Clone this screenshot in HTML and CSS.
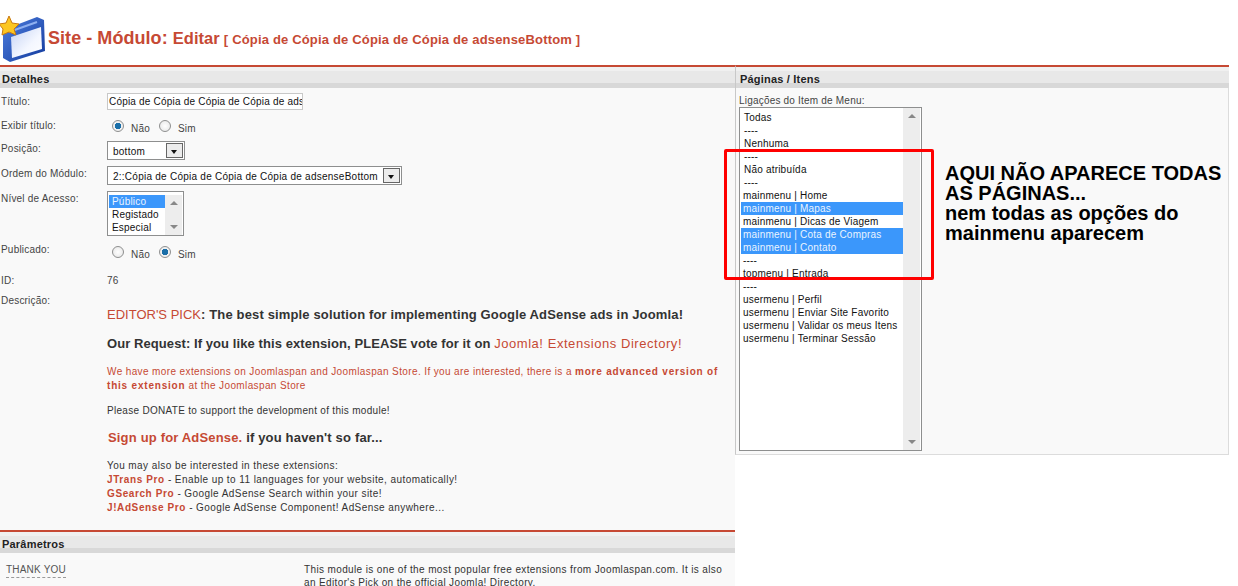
FILE: index.html
```html
<!DOCTYPE html>
<html lang="pt">
<head>
<meta charset="utf-8">
<title>Site - Módulo: Editar</title>
<link rel="stylesheet" href="styles.css">
</head>
<body>
<div class="page">
  <header class="toolbar">
    <svg class="logo" width="46" height="62" viewBox="0 0 46 62">
      <defs>
        <linearGradient id="pane" x1="0" y1="0" x2="1" y2="1"><stop offset="0" stop-color="#c4d2f4"/><stop offset=".6" stop-color="#f4f7ff"/><stop offset="1" stop-color="#ffffff"/></linearGradient>
        <linearGradient id="frame" x1="0" y1="0" x2="1" y2="1"><stop offset="0" stop-color="#4f7fe0"/><stop offset="1" stop-color="#123a9c"/></linearGradient>
      </defs>
      <path d="M3 29 L37 16 L44 19 L45 50 L10 61 L3 57 Z" fill="url(#frame)"/>
      <path d="M11 36 L41 26 L42 48 L12 57 Z" fill="url(#pane)"/>
      <path d="M9 31 L37 21" stroke="#8fb0f0" stroke-width="2" fill="none"/>
      <path d="M9 15 L12 22 L19 23 L14 28 L16 34 L9 31 L2 34 L3 28 L-1 23 L6 22 Z" fill="#fcc621" stroke="#c9790f" stroke-width="1"/>
    </svg>
    <h1 class="title">Site - Módulo: <span class="title-sub">Editar</span> <small class="title-name">[ Cópia de Cópia de Cópia de Cópia de adsenseBottom ]</small></h1>
  </header>
  <div class="columns">
    <section class="left">
      <h2 class="bar">Detalhes</h2>
      <div class="form">
        <div class="row row-titulo"><span class="lab">Título:</span><div class="input">Cópia de Cópia de Cópia de Cópia de ads</div></div>
        <div class="row row-exibir"><span class="lab">Exibir título:</span><div class="radios"><i class="radio on"></i><span>Não</span><i class="radio"></i><span>Sim</span></div></div>
        <div class="row row-pos"><span class="lab">Posição:</span><div class="select sel-pos"><span>bottom</span><b class="arrow"></b></div></div>
        <div class="row row-ordem"><span class="lab">Ordem do Módulo:</span><div class="select sel-ordem"><span>2::Cópia de Cópia de Cópia de Cópia de adsenseBottom</span><b class="arrow"></b></div></div>
        <div class="row row-nivel"><span class="lab">Nível de Acesso:</span>
          <div class="list list-nivel">
            <div class="opts"><div class="opt sel">Público</div><div class="opt">Registado</div><div class="opt">Especial</div></div>
            <div class="scroll"><i class="up"></i><i class="down"></i></div>
          </div>
        </div>
        <div class="row row-pub"><span class="lab">Publicado:</span><div class="radios"><i class="radio"></i><span>Não</span><i class="radio on"></i><span>Sim</span></div></div>
        <div class="row row-id"><span class="lab">ID:</span><span class="val">76</span></div>
        <div class="row row-desc"><span class="lab">Descrição:</span></div>
        <div class="desc">
          <p class="big p1"><span class="red">EDITOR'S PICK</span>: The best simple solution for implementing Google AdSense ads in Joomla!</p>
          <p class="big p2">Our Request: If you like this extension, PLEASE vote for it on <span class="red">Joomla! Extensions Directory!</span></p>
          <p class="small-red p3">We have more extensions on Joomlaspan and Joomlaspan Store. If you are interested, there is a <b>more advanced version of this extension</b> at the Joomlaspan Store</p>
          <p class="plain p4">Please DONATE to support the development of this module!</p>
          <p class="big p5"><b class="red">Sign up for AdSense.</b> if you haven't so far...</p>
          <p class="plain p6">You may also be interested in these extensions:<br><b class="red">JTrans Pro</b> - Enable up to 11 languages for your website, automatically!<br><b class="red">GSearch Pro</b> - Google AdSense Search within your site!<br><b class="red">J!AdSense Pro</b> - Google AdSense Component! AdSense anywhere...</p>
        </div>
      </div>
      <h2 class="bar bar-par">Parâmetros</h2>
      <div class="params">
        <span class="thank">THANK YOU</span>
        <p class="par-text">This module is one of the most popular free extensions from Joomlaspan.com. It is also an Editor's Pick on the official Joomla! Directory.</p>
      </div>
    </section>
    <section class="right">
      <h2 class="bar bar-right">Páginas / Itens</h2>
      <div class="panel">
        <div class="panel-label">Ligações do Item de Menu:</div>
        <div class="list list-menu">
          <div class="opts">
            <div class="opt in">Todas</div><div class="opt in">----</div><div class="opt in">Nenhuma</div><div class="opt in">----</div><div class="opt in">Não atribuída</div><div class="opt in">----</div>
            <div class="opt">mainmenu | Home</div><div class="opt sel">mainmenu | Mapas</div><div class="opt">mainmenu | Dicas de Viagem</div><div class="opt sel">mainmenu | Cota de Compras</div><div class="opt sel">mainmenu | Contato</div><div class="opt">----</div><div class="opt">topmenu | Entrada</div><div class="opt">----</div>
            <div class="opt">usermenu | Perfil</div><div class="opt">usermenu | Enviar Site Favorito</div><div class="opt">usermenu | Validar os meus Itens</div><div class="opt">usermenu | Terminar Sessão</div>
          </div>
          <div class="scroll"><i class="up"></i><i class="down"></i></div>
        </div>
      </div>
    </section>
  </div>
  <div class="redbox"></div>
  <div class="note"><strong>AQUI NÃO APARECE TODAS<br>AS PÁGINAS...</strong><br>nem todas as opções do<br>mainmenu aparecem</div>
</div>
</body>
</html>
```
FILE: styles.css
```css
html, body { margin: 0; padding: 0; background: #fff; }
body { font-family: "Liberation Sans", Arial, sans-serif; font-size: 10px; color: #333; }
.page { position: relative; width: 1238px; height: 586px; overflow: hidden; }
.toolbar { height: 65px; display: flex; align-items: flex-start; }
.logo { flex: none; margin-top: 1px; }
.title { margin: 27px 0 0 2px; font-size: 18px; line-height: 22px; font-weight: bold; color: #c64934; white-space: nowrap; letter-spacing: .05px; }
.title-sub { font-size: 16.5px; }
.title-name { font-size: 13px; letter-spacing: .17px; margin-left: -1px; }
.columns { display: flex; align-items: flex-start; }
.left { width: 735px; flex: none; background: #f9f9f9; height: 521px; overflow: hidden; }
.right { width: 494px; flex: none; }
.bar { margin: 0; height: 23px; box-sizing: border-box; border-top: 2px solid #c64934; padding: 5px 0 0 2px; font-size: 11px; line-height: 14px; font-weight: bold; color: #222; letter-spacing: .2px;
  background: linear-gradient(#f0f0f0 0, #f0f0f0 4px, #e8e8e8 4px, #e8e8e8 16px, #d8d8d8 16px, #d8d8d8 100%); }
.bar-right { padding-left: 4px; border-left: 1px solid #c8c8c8; }
.form { height: 442px; }
.row { display: flex; align-items: flex-start; }
.lab { width: 107px; flex: none; font-size: 10px; line-height: 13px; color: #444; letter-spacing: .2px; padding-left: 1px; box-sizing: border-box; }
.row-titulo { height: 25px; padding-top: 5px; }
.row-titulo .lab { margin-top: 2px; }
.row-exibir { height: 23px; }
.row-exibir .lab { margin-top: 1px; }
.row-pos { height: 25px; }
.row-ordem { height: 25px; }
.row-nivel { height: 52px; }
.row-pub { height: 31px; }
.row-pub .radios { margin-top: 1px; }
.row-id { height: 20px; }
.row-desc { height: 13px; }
.row-pos .lab, .row-ordem .lab { margin-top: 1px; }
.row-nivel .lab { margin-top: 1px; }
.input { width: 196px; height: 17px; box-sizing: border-box; border: 1px solid #c8c8c8; background: #fff; font-size: 10px; line-height: 15px; color: #111; overflow: hidden; white-space: nowrap; letter-spacing: .2px; padding-left: 1px; }
.radios { display: flex; align-items: center; margin-left: 5px; height: 16px; font-size: 10px; color: #444; letter-spacing: .2px; }
.radios span { margin: 4px 9px 0 7px; }
.radio { width: 10px; height: 10px; border-radius: 50%; border: 1px solid #8e8f8f; background: radial-gradient(#fff, #e4e4e4); display: block; flex: none; }
.radio.on { background: radial-gradient(#1a6ea8 0, #1a6ea8 3px, #f0f0f0 3.5px); }
.val { font-size: 10px; line-height: 13px; color: #444; letter-spacing: .2px; }
.select { height: 19px; box-sizing: border-box; border: 1px solid #8e8f8f; background: #fff; display: flex; align-items: center; justify-content: space-between; font-size: 10px; color: #111; padding: 0 1px 0 5px; white-space: nowrap; letter-spacing: .25px; }
.select span { padding-top: 1px; }
.sel-pos { width: 78px; }
.sel-ordem { width: 295px; }
.arrow { display: block; width: 17px; height: 15px; box-sizing: border-box; border: 1px solid #666; background: #ececec; position: relative; }
.arrow::after { content: ""; position: absolute; left: 4px; top: 6px; border: 3.5px solid transparent; border-top: 4px solid #111; border-bottom: 0; }
.list { box-sizing: border-box; border: 1px solid #8e8f8f; background: #fff; display: flex; }
.list-nivel { width: 77px; height: 45px; padding: 3px 1px 0; }
.list-nivel .opt { padding-left: 3px; }
.opts { flex: 1; min-width: 0; }
.opt { height: 13px; line-height: 13px; font-size: 10px; color: #111; padding-left: 2px; white-space: nowrap; letter-spacing: .2px; }
.opt.in { padding-left: 3px; }
.opt.sel { background: #3b97fb; color: #eaf4ff; }
.scroll { flex: none; width: 17px; background: #ededed; position: relative; }
.scroll .up, .scroll .down { position: absolute; left: 5px; border: 4px solid transparent; }
.scroll .up { top: 6px; border-bottom: 4px solid #888; border-top: 0; }
.scroll .down { bottom: 6px; border-top: 4px solid #888; border-bottom: 0; }
.desc { padding: 0 12px 0 107px; }
.desc p { margin: 0; }
.red { color: #c64934; }
.big { font-size: 13px; line-height: 16px; font-weight: bold; color: #333; }
.big span.red { font-weight: normal; letter-spacing: .55px; }
.p1 { letter-spacing: .15px; }
.big.p1 span.red { letter-spacing: 0; }
.desc .p2 { margin-top: 13px; letter-spacing: .08px; }
.small-red { font-size: 10px; line-height: 14px; color: #c64934; letter-spacing: .38px; }
.small-red b { letter-spacing: .8px; }
.desc .p3 { margin-top: 13px; }
.plain { font-size: 10px; line-height: 14px; color: #333; }
.desc .p4 { margin-top: 11px; letter-spacing: .3px; }
.desc .p5 { margin-top: 12px; padding-left: 1px; letter-spacing: .17px; }
.desc .p6 { margin-top: 13px; letter-spacing: .42px; }
.desc .p6 b { letter-spacing: .6px; }
.bar-par { margin-top: 0; }
.params { height: 40px; display: flex; align-items: flex-start; padding-top: 10px; }
.thank { margin-left: 6px; flex: none; font-size: 10px; line-height: 13px; padding-bottom: 1px; color: #555; letter-spacing: .2px; border-bottom: 1px dashed #999; }
.par-text { margin: 0 0 0 auto; width: 431px; box-sizing: border-box; padding-right: 12px; font-size: 10px; line-height: 13px; color: #333; letter-spacing: .37px; }
.panel { height: 367px; box-sizing: border-box; background: #f9f9f9; border: 1px solid #dcdcdc; border-top: 0; border-left: 1px solid #c8c8c8; padding: 6px 0 0 3px; }
.panel-label { font-size: 10px; line-height: 13px; color: #444; letter-spacing: .2px; }
.list-menu { width: 183px; height: 344px; padding: 3px 1px 0; }
.list-menu .scroll { margin-top: -3px; }
.redbox { position: absolute; left: 724px; top: 149px; width: 204px; height: 125px; border: 3px solid #f00; border-radius: 2px; }
.note { position: absolute; left: 945px; top: 163px; font-size: 20px; line-height: 20px; font-weight: bold; color: #000; white-space: nowrap; }
```
